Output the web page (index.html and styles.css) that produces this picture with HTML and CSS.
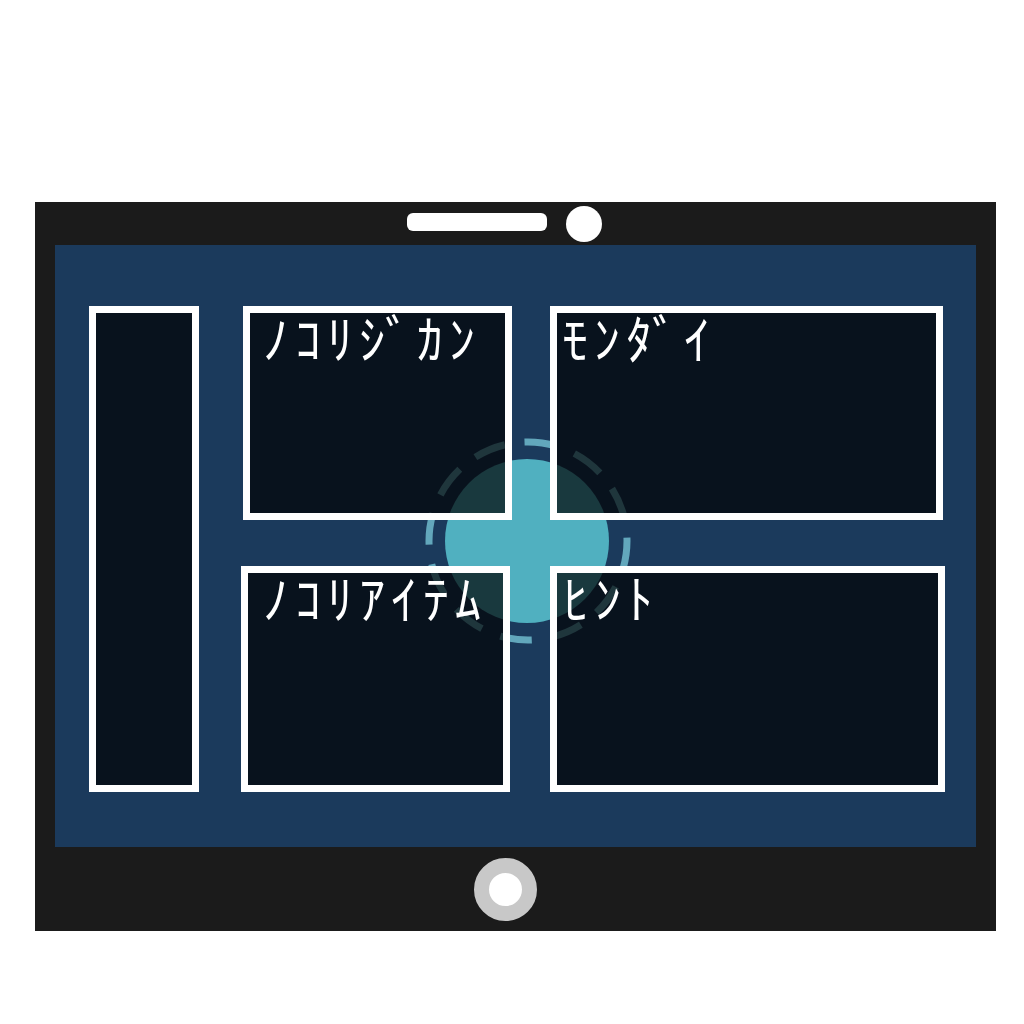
FILE: index.html
```html
<!DOCTYPE html>
<html lang="ja">
<head>
    <meta charset="UTF-8">
    <meta name="viewport" content="width=device-width, initial-scale=1.0">
    <title>Tablet</title>
    <link rel="stylesheet" href="styles.css">
</head>
<body>
    <div class="device">
        <div class="device-top">
            <div class="speaker"></div>
            <div class="camera"></div>
        </div>

        <div class="screen">
            <svg class="target" width="230" height="230" viewBox="0 0 230 230">
                <circle cx="115" cy="115" r="82" fill="#50b0c0"/>
                <circle cx="116" cy="115" r="99" fill="none" stroke="#6ab4c6" stroke-opacity="0.9"
                        stroke-width="7" stroke-dasharray="32 19.8" stroke-dashoffset="4"/>
            </svg>

            <div class="panel panel-side"></div>
            <div class="main">
                <div class="row row-top">
                    <div class="panel panel-time"><span class="label">ﾉｺﾘｼﾞｶﾝ</span></div>
                    <div class="panel panel-question"><span class="label">ﾓﾝﾀﾞｲ</span></div>
                </div>
                <div class="row row-bottom">
                    <div class="panel panel-items"><span class="label">ﾉｺﾘｱｲﾃﾑ</span></div>
                    <div class="panel panel-hint"><span class="label">ﾋﾝﾄ</span></div>
                </div>
            </div>
        </div>

        <div class="device-bottom">
            <div class="home-button"></div>
        </div>
    </div>
</body>
</html>
```

FILE: styles.css
```css
body { margin: 0; background: #fff; font-family: "Noto Sans CJK JP", "Noto Sans", sans-serif; }

.device {
    margin: 202px 0 0 35px;
    width: 961px;
    height: 729px;
    background-color: #1b1b1b;
    display: flex;
    flex-direction: column;
}

.device-top {
    height: 43px;
    display: flex;
    align-items: center;
    padding-left: 372px;
    box-sizing: border-box;
}
.speaker {
    width: 140px;
    height: 18px;
    background: #fff;
    border-radius: 6px;
    margin-top: -3px;
}
.camera {
    width: 36px;
    height: 36px;
    background: #fff;
    border-radius: 50%;
    margin-left: 19px;
}

.screen {
    position: relative;
    margin: 0 20px;
    height: 602px;
    background-color: #1b3a5c;
    padding: 61px 31px 55px 34px;
    box-sizing: border-box;
    display: flex;
}
.target {
    position: absolute;
    left: 357px;
    top: 181px;
    z-index: 0;
}

.panel {
    position: relative;
    z-index: 1;
    box-sizing: border-box;
    border: 7px solid #fff;
    background-color: rgba(0, 0, 0, 0.68);
}
.panel-side { width: 110px; height: 486px; }

.main {
    display: flex;
    flex-direction: column;
    gap: 46px;
}
.row { display: flex; }
.row-top { height: 214px; }
.row-bottom { height: 226px; }

.panel-time { width: 269px; margin-left: 44px; padding-left: 13px; }
.panel-question { width: 393px; margin-left: 38px; padding-left: 5px; }
.panel-items { width: 269px; margin-left: 42px; padding-left: 15px; }
.panel-hint { width: 395px; margin-left: 40px; padding-left: 6px; }

.label {
    display: block;
    color: #fff;
    font-size: 52px;
    line-height: 1;
    letter-spacing: 6px;
    margin-top: -2px;
    white-space: nowrap;
}

.device-bottom {
    flex: 1;
    display: flex;
    align-items: center;
    padding-left: 439px;
}
.home-button {
    width: 33px;
    height: 33px;
    border: 15px solid #c8c8c8;
    border-radius: 50%;
    background: #fff;
}
```
